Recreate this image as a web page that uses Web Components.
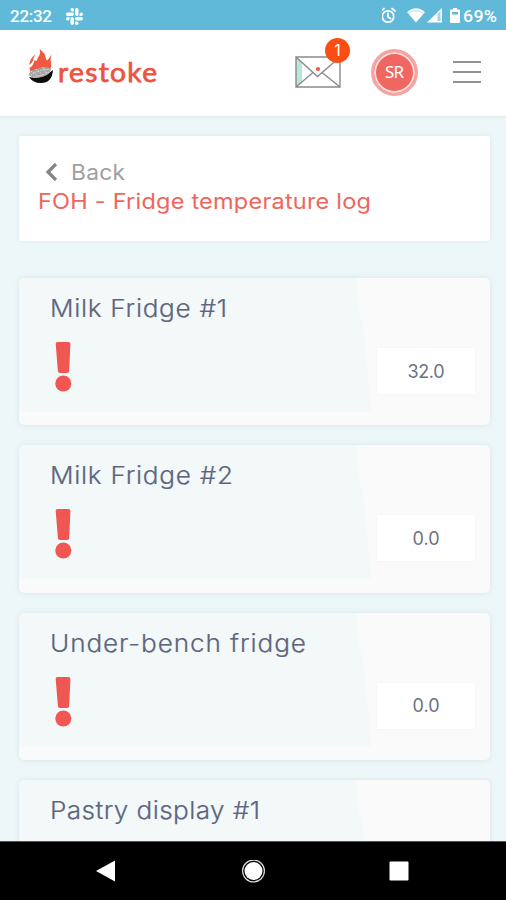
<!DOCTYPE html>
<html lang="en">
<head>
<meta charset="utf-8">
<title>Fridge temperature log</title>
<style>
html,body{margin:0;height:100%;overflow:hidden}
body{font-family:Inter,"Open Sans",sans-serif;background:#edf7fa}
</style>
</head>
<body>
<app-screen>
  <status-bar slot="status"></status-bar>
  <app-header slot="header"></app-header>
  <page-title><fit-text slot="back" width="54" stretch="1.06">Back</fit-text><fit-text slot="title" width="333" stretch="1.12">FOH - Fridge temperature log</fit-text></page-title>
  <fridge-card><fit-text width="177" stretch="1.09">Milk Fridge #1</fit-text><fit-text slot="value" width="37">32.0</fit-text></fridge-card>
  <fridge-card><fit-text width="183" stretch="1.09">Milk Fridge #2</fit-text><fit-text slot="value" width="27">0.0</fit-text></fridge-card>
  <fridge-card><fit-text width="256" stretch="1.09">Under-bench fridge</fit-text><fit-text slot="value" width="27">0.0</fit-text></fridge-card>
  <fridge-card><fit-text width="210" stretch="1.09">Pastry display #1</fit-text></fridge-card>
  <nav-bar slot="nav"></nav-bar>
</app-screen>
<script>
function define(name, html) {
  const t = document.createElement('template');
  t.innerHTML = html;
  customElements.define(name, class extends HTMLElement {
    constructor() {
      super();
      this.attachShadow({mode: 'open'}).append(t.content.cloneNode(true));
    }
  });
}

define('app-screen', `
<style>
:host{display:flex;flex-direction:column;height:900px;width:506px;background:#edf7fa;overflow:hidden}
main{flex:1;min-height:0;overflow:hidden;padding:19px 16px 0 19px;display:flex;flex-direction:column;gap:20px}
</style>
<slot name="status"></slot><slot name="header"></slot><main><slot></slot></main><slot name="nav"></slot>`);

define('status-bar', `
<style>
:host{display:flex;flex:none;box-sizing:border-box;height:30px;background:#60b9d8;color:#fff;align-items:center;padding:2px 9px 0 10px;font:500 17px/28px Roboto,sans-serif}
.time{margin-right:14px}
.pct{margin-left:3px}
svg{display:block;fill:#fff}
.right{margin-left:auto;display:flex;align-items:center}
</style>
<fit-text class="time" width="42">22:32</fit-text>
<svg width="17" height="17" viewBox="0 0 24 24"><path d="M5 15.2a2.500 2.500 0 1 1-2.500-2.500H5zM6.300 15.200a2.500 2.500 0 0 1 5 0v6.300a2.500 2.500 0 0 1-5 0zM8.800 5a2.500 2.500 0 1 1 2.500-2.500V5zM8.800 6.300a2.500 2.500 0 0 1 0 5H2.500a2.500 2.500 0 0 1 0-5zM19 8.800a2.500 2.500 0 1 1 2.500 2.500H19zM17.700 8.800a2.500 2.500 0 0 1-5 0V2.500a2.500 2.500 0 0 1 5 0zM15.200 19a2.500 2.500 0 1 1-2.500 2.500V19zM15.200 17.700a2.500 2.500 0 0 1 0-5h6.300a2.500 2.500 0 0 1 0 5z"/></svg>
<div class="right">
<svg width="78" height="18" viewBox="0 0 78 18">
<g fill="none" stroke="#fff" stroke-width="1.700" stroke-linecap="round" transform="translate(-2 0)"><circle cx="8" cy="9.500" r="5.700"/><path d="M8 6v4l2.500 1.500M1 4l3-2.500M12 1.500L15 4"/></g>
<path d="M25 5.200Q34-2.600 43 5.200L34 15.500z"/><path d="M25.500 5Q34-1.500 42.500 5" fill="none" stroke="#60b9d8" stroke-width=".8" transform="translate(0 2)" opacity=".6"/>
<path d="M45 15.500L60 1v14.500z"/><path d="M55.500 7l3-2.800V14h-3z" fill="#60b9d8" opacity=".6"/>
<path d="M71 1h4v1.600h2q1 0 1 1v11.400q0 1-1 1h-8q-1 0-1-1V3.600q0-1 1-1h2z"/><path d="M70 5h6v2.500h-6z" fill="#60b9d8"/>
</svg>
<fit-text class="pct" width="34" stretch="1.05">69%</fit-text>
</div>`);

define('app-header', `
<style>
:host{display:flex;flex:none;box-sizing:border-box;height:87px;background:#fff;align-items:center;padding:0 25px 2px 28px;border-bottom:1px solid #e4eef0;box-shadow:0 1px 3px #0000000a}
.logo{display:flex;align-items:center;color:#ec5340}
.logo svg{margin-top:-12px}
.name{margin:-1px 0 0 5px;font:400 27px/36px Lato,sans-serif;-webkit-text-stroke:.75px #ec5340}
.mail{position:relative;margin-left:138px;width:46px;height:32px}
.mail svg{display:block}
.badge{position:absolute;left:30px;top:-18px;width:25px;height:25px;border-radius:50%;background:#fc4d12;color:#fff;font:400 16px/25px Inter,sans-serif;text-align:center}
.avatar{margin-left:30px;box-sizing:border-box;width:47px;height:47px;border-radius:50%;background:#ef6760;border:3px solid #f4a5a2;box-shadow:inset 0 0 0 2px #fbdcda;color:#fff;display:flex;align-items:center;justify-content:center;font:400 17px/40px "Noto Sans",sans-serif}
.menu{margin-left:auto;width:28px;display:grid;gap:8px}
.menu i{height:2px;background:#929292}
</style>
<div class="logo">
<svg width="25" height="35" viewBox="0 0 25 35">
<path fill="#f0583f" d="M3 25L1.500 19Q6 16 6.500 11Q8 12 8.500 12Q9.500 9 11.500 6Q13 3 11.500 0Q17.500 4 18 10Q18.500 12 19.500 11Q21.500 9 23.500 5.500Q22 10 23 14Q24 18 21 22zM2 13Q3 8 7.500 5.500Q5 9 5 11.500Q4 14 1.500 16Q1 14.500 2 13z"/>
<path fill="#0b0b0b" d="M1 28Q14 31 25 21Q24 34 13 34Q5 34 1 28z"/>
<path fill="#a5a5a5" d="M.500 26Q3 20 10 19.500Q19 16.500 23 20Q23 25 14 28Q5 30 .500 26z"/>
<path d="M3 26Q11 20 22 20.500M5 28Q14 27 21 23M3 22l7 5M8 20l7 6M15 18.500l4 6" stroke="#e2e2e2" stroke-width=".9" fill="none" stroke-dasharray="1.500 1"/>
</svg><fit-text class="name" width="99" stretch="1.04">restoke</fit-text></div>
<div class="mail"><svg width="46" height="32" viewBox="0 0 46 32"><path fill="#fff" d="M1 1h44v30H1z"/><path fill="#b8e6da" d="M1 1l6 5v20l-6 5z"/><g fill="none" stroke="#8b8b8b" stroke-width="1.400"><path d="M1 1h44v30H1zM1 1l21.500 19.500L45 1M1 31l17-14.500M45 31L27 16.500"/></g><circle cx="23" cy="13" r="2.100" fill="#f4504e"/></svg><span class="badge">1</span></div>
<div class="avatar"><fit-text width="19">SR</fit-text></div>
<div class="menu"><i></i><i></i><i></i></div>`);

define('page-title', `
<style>
:host{display:block;flex:none;box-sizing:border-box;height:105px;margin-bottom:17px;padding:21px 19px;background:#fff;border-radius:2px;box-shadow:0 0 4px #5c808020}
.back{display:flex;align-items:center;height:30px;color:#a0a0a0;font-size:21.500px;padding-left:7px;gap:12px}
.title{height:30px;line-height:29px;color:#f0655b;font-size:21px}
</style>
<div class="back"><svg width="14" height="20" viewBox="0 0 14 20"><path d="M11 2L3 10l8 8" fill="none" stroke="#858585" stroke-width="3.200"/></svg><slot name="back"></slot></div>
<div class="title"><slot name="title"></slot></div>`);

define('fridge-card', `
<style>
:host{display:grid;grid-template-columns:1fr 98px;grid-template-rows:auto 1fr;flex:none;box-sizing:border-box;height:147.300px;padding:14px 15px 0 31px;border-radius:5px;box-shadow:0 0 5px #5c808028;
background:#fafafa;position:relative;isolation:isolate}
:host::before{content:"";position:absolute;z-index:-1;left:0;top:0;width:353px;height:134px;border-radius:5px 0 0 0;background:#f3f8f9;clip-path:polygon(0 0,338px 0,340px 32px,346px 60px,352px 134px,0 134px)}
.name{grid-column:1/3;height:34px;line-height:34px;font-size:24px;font-weight:300;color:#5d6580;-webkit-text-stroke:.2px #5d6580}
.mark{margin:16px 0 0 5px}
.value{margin-top:22px;height:46px;display:flex;align-items:center;justify-content:center;background:#fff;box-shadow:0 0 2px #0000000b;color:#6d7183;font-size:18px}
</style>
<div class="name"><slot></slot></div>
<svg class="mark" width="18" height="50" viewBox="0 0 18 50" fill="#f05753"><path d="M2.500 0h11q2 0 1.900 2l-1.200 27q-.1 2-2 2H5q-2 0-2.100-2L.700 2Q.600 0 2.500 0z"/><circle cx="8.300" cy="41.500" r="8"/></svg>
<div class="value"><slot name="value"></slot></div>`);

define('nav-bar', `
<style>
:host{display:flex;flex:none;box-sizing:border-box;height:59px;background:#000;padding:18px 96px 0 96px;justify-content:space-between;border-top:1px solid #555}
svg{display:block;fill:#fff}
</style>
<svg width="20" height="24" viewBox="0 0 20 24"><path d="M0 11L19 .500v21z"/></svg>
<svg width="25" height="24" viewBox="0 0 25 24" style="margin-left:27px"><circle cx="12.500" cy="11" r="9"/><circle cx="12.500" cy="11" r="10.900" fill="none" stroke="#ddd" stroke-width="1.200"/></svg>
<svg width="21" height="24" viewBox="0 0 21 24" style="margin-left:26px"><rect x=".5" y="1.500" width="19" height="19" rx="1"/></svg>`);

/* Widens its glyphs by "stretch", then spaces them so that the line fills "width". */
customElements.define('fit-text', class extends HTMLElement {
  connectedCallback() {
    if (!this.shadowRoot) {
      this.attachShadow({mode: 'open'}).innerHTML =
        '<style>:host{display:inline-block;flex:none;white-space:nowrap}span{display:inline-block;transform-origin:0 50%}</style><span><slot></slot></span>';
    }
    const span = this.shadowRoot.querySelector('span');
    const n = this.textContent.length;
    const width = Number(this.getAttribute('width'));
    const stretch = Number(this.getAttribute('stretch') || 1);
    const gap = (width / stretch - span.getBoundingClientRect().width) / (n - 1);
    this.style.width = width + 'px';
    span.style.letterSpacing = gap + 'px';
    if (stretch !== 1) span.style.transform = 'scaleX(' + stretch + ')';
  }
});
</script>
</body>
</html>
